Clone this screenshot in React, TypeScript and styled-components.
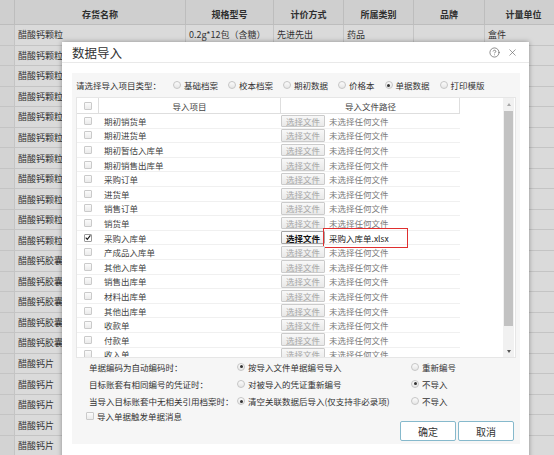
import { CircleHelp, X } from "lucide-react";
import styled, { createGlobalStyle } from "styled-components";

const GlobalStyle = createGlobalStyle`
  html, body {
    margin: 0;
    padding: 0;
  }
  body {
    width: 554px;
    height: 455px;
    overflow: hidden;
    font-family: "Noto Sans CJK SC", "Liberation Sans", sans-serif;
  }
  * {
    box-sizing: border-box;
  }
`;

const Page = styled.div`
  position: relative;
  width: 554px;
  height: 455px;
  overflow: hidden;
  background: #d8d8d8;
`;

/* ---------- sheet behind the modal ---------- */

const Sheet = styled.div`
  display: grid;
  grid-template-columns: 15px 171px 88px 70px 70px 71px 78px;
  grid-template-rows: 25px;
  grid-auto-rows: 20.55px;
`;

const HeadCell = styled.div`
  display: flex;
  align-items: flex-end;
  justify-content: center;
  padding-bottom: 4px;
  background: #cfcfcf;
  border-right: 1px solid #bdbdbd;
  border-bottom: 1px solid #bdbdbd;
  font-size: 9px;
  line-height: 10px;
  font-weight: bold;
  color: #2e2e2e;
  white-space: nowrap;
`;

const Cell = styled.div<{ $first?: boolean }>`
  display: flex;
  align-items: center;
  padding: 0 3px;
  background: ${(p) => (p.$first ? "#d3d3d3" : "#dadada")};
  border-right: 1px solid #c4c4c4;
  border-bottom: 1px solid #c4c4c4;
  font-size: 9px;
  color: #333;
  white-space: nowrap;
  overflow: hidden;
`;

/* ---------- modal ---------- */

const Dialog = styled.div`
  position: absolute;
  left: 62px;
  top: 42px;
  width: 467px;
  height: 425px;
  background: #fff;
  box-shadow: 0 0 5px rgba(0, 0, 0, 0.35);
  display: flex;
  flex-direction: column;
`;

const DialogHeader = styled.div`
  height: 21px;
  display: flex;
  align-items: center;
  padding: 0 11px 0 10px;
  border-bottom: 1px solid #e9e9e9;
`;

const Title = styled.div`
  font-size: 12.5px;
  color: #333;
`;

const HeaderTools = styled.div`
  margin-left: auto;
  display: flex;
  align-items: center;
  gap: 7px;
  color: #666;
`;

const Body = styled.div`
  padding: 10px 9px 0 10px;
`;

const Panel = styled.div`
  background: #f6f6f6;
  padding: 0 4px 3px 2px;
`;

const TypeRow = styled.div`
  height: 24px;
  display: flex;
  align-items: center;
  padding-left: 2px;
  font-size: 8.5px;
  color: #333;
  white-space: nowrap;
`;

const TypeLabel = styled.span`
  margin-right: 12px;
`;

const RadioItem = styled.label`
  display: flex;
  align-items: center;
  gap: 3px;
  margin-right: 10px;
`;

const RadioDot = styled.span<{ $on?: boolean }>`
  width: 8px;
  height: 8px;
  border-radius: 50%;
  border: 1px solid #c6c6c6;
  background: linear-gradient(#fbfbfb, #e6e6e6);
  display: inline-flex;
  align-items: center;
  justify-content: center;
  flex: none;
  &::after {
    content: "";
    width: 3px;
    height: 3px;
    border-radius: 50%;
    background: ${(p) => (p.$on ? "#333" : "transparent")};
  }
`;

const Box = styled.span<{ $on?: boolean }>`
  width: 8px;
  height: 8px;
  border: 1px solid ${(p) => (p.$on ? "#9a9a9a" : "#cacaca")};
  border-radius: 1px;
  background: ${(p) => (p.$on ? "#fff" : "linear-gradient(#fbfbfb, #ebebeb)")};
  display: inline-flex;
  align-items: center;
  justify-content: center;
  flex: none;
`;

const List = styled.div`
  margin-left: 2px;
  height: 261px;
  background: #fff;
  border: 1px solid #e6e6e6;
  display: flex;
  overflow: hidden;
`;

const Table = styled.div`
  width: 383px;
  flex: none;
`;

const Cols = "22px 182px 179px";

const TableHead = styled.div`
  display: grid;
  grid-template-columns: ${Cols};
  height: 16px;
  border-bottom: 1px solid #dedede;
  border-right: 1px solid #dedede;
  font-size: 8.5px;
  color: #444;
`;

const HeadItem = styled.div<{ $divider?: boolean }>`
  display: flex;
  align-items: center;
  justify-content: center;
  border-right: ${(p) => (p.$divider ? "1px solid #dedede" : "none")};
`;

const Row = styled.div`
  display: grid;
  grid-template-columns: ${Cols};
  height: 14.6px;
  border-bottom: 1px solid #f0f0f0;
  font-size: 8.5px;
  color: #444;
  white-space: nowrap;
`;

const CheckCell = styled.div`
  display: flex;
  align-items: center;
  justify-content: center;
`;

const NameCell = styled.div`
  display: flex;
  align-items: center;
  padding-left: 5px;
`;

const FileCell = styled.div`
  position: relative;
  display: flex;
  align-items: center;
  gap: 4px;
`;

const FileButton = styled.span<{ $on?: boolean }>`
  height: 12.5px;
  padding: 0 4px;
  display: inline-flex;
  align-items: center;
  border: 1px solid ${(p) => (p.$on ? "#a4a4a4" : "#cbcbcb")};
  border-radius: 1px;
  background: ${(p) => (p.$on ? "linear-gradient(#fdfdfd, #ededed)" : "linear-gradient(#f8f8f8, #e9e9e9)")};
  color: ${(p) => (p.$on ? "#111" : "#a5a5a5")};
  font-weight: ${(p) => (p.$on ? "bold" : "normal")};
  font-size: 8.5px;
  line-height: 10px;
`;

const FileName = styled.span<{ $on?: boolean }>`
  color: ${(p) => (p.$on ? "#222" : "#7a7a7a")};
`;

const Mark = styled.span`
  position: absolute;
  left: 42px;
  top: -3px;
  width: 85px;
  height: 20.6px;
  border: 1.5px solid #df2f2f;
`;

const Gap = styled.div`
  flex: 1;
`;

const ScrollBar = styled.div`
  width: 11px;
  margin-right: 1px;
  background: #f1f1f1;
  display: flex;
  flex-direction: column;
  align-items: center;
`;

const ScrollArrow = styled.div<{ $down?: boolean }>`
  height: 12px;
  display: flex;
  align-items: center;
  justify-content: center;
  &::after {
    content: "";
    border-left: 2.5px solid transparent;
    border-right: 2.5px solid transparent;
    ${(p) => (p.$down ? "border-top: 3px solid #555;" : "border-bottom: 3px solid #a8a8a8;")}
  }
`;

const Thumb = styled.div`
  width: 9px;
  height: 215px;
  margin-top: 1px;
  background: #c2c2c2;
`;

const Options = styled.div`
  padding-left: 15px;
  font-size: 8.5px;
  color: #333;
  white-space: nowrap;
`;

const OptionRow = styled.div<{ $h: number }>`
  display: grid;
  grid-template-columns: 148px 174px auto;
  align-items: center;
  height: ${(p) => p.$h}px;
`;

const Choice = styled.label`
  display: flex;
  align-items: center;
  gap: 3px;
`;

const CheckRow = styled.label`
  display: flex;
  align-items: center;
  gap: 3px;
  height: 11px;
  margin-left: -3px;
`;

const Footer = styled.div`
  display: flex;
  justify-content: flex-end;
  gap: 2px;
  padding-right: 2px;
`;

const ActionButton = styled.button`
  width: 56px;
  height: 20px;
  padding: 0;
  border: 1px solid #86b9cc;
  border-radius: 2px;
  background: #fff;
  color: #333;
  font-family: inherit;
  font-size: 10px;
`;

const items = [
  "期初销货单",
  "期初进货单",
  "期初暂估入库单",
  "期初销售出库单",
  "采购订单",
  "进货单",
  "销售订单",
  "销货单",
  "采购入库单",
  "产成品入库单",
  "其他入库单",
  "销售出库单",
  "材料出库单",
  "其他出库单",
  "收款单",
  "付款单",
  "收入单",
];

const types = [
  { label: "基础档案", on: false },
  { label: "校本档案", on: false },
  { label: "期初数据", on: false },
  { label: "价格本", on: false },
  { label: "单据数据", on: true },
  { label: "打印模版", on: false },
];

const sheetHead = ["", "存货名称", "规格型号", "计价方式", "所属类别", "品牌", "计量单位"];

const sheetNames = Array.from({ length: 22 }, (_, i) =>
  i < 11 ? "醋酸钙颗粒" : i < 16 ? "醋酸钙胶囊" : "醋酸钙片"
);

const Tick = () => (
  <svg width="7" height="7" viewBox="0 0 7 7">
    <path d="M0.8 3.6 L2.7 5.6 L6.3 1" fill="none" stroke="#1a1a1a" strokeWidth="1.3" />
  </svg>
);

const App = () => {
  return (
    <Page>
      <GlobalStyle />
      <Sheet>
        {sheetHead.map((h, i) => (
          <HeadCell key={i}>{h}</HeadCell>
        ))}
        {sheetNames.map((name, r) => {
          const rest = r === 0 ? ["0.2g*12包（含糖）", "先进先出", "药品", "", "盒件"] : ["", "", "", "", ""];
          return [
            <Cell key={`${r}-0`} $first />,
            <Cell key={`${r}-1`}>{name}</Cell>,
            ...rest.map((v, c) => <Cell key={`${r}-${c + 2}`}>{v}</Cell>),
          ];
        })}
      </Sheet>

      <Dialog>
        <DialogHeader>
          <Title>数据导入</Title>
          <HeaderTools>
            <CircleHelp size={11} strokeWidth={1.6} />
            <X size={11} strokeWidth={1.4} />
          </HeaderTools>
        </DialogHeader>
        <Body>
          <Panel>
            <TypeRow>
              <TypeLabel>请选择导入项目类型：</TypeLabel>
              {types.map((t) => (
                <RadioItem key={t.label}>
                  <RadioDot $on={t.on} />
                  {t.label}
                </RadioItem>
              ))}
            </TypeRow>

            <List>
              <Table>
                <TableHead>
                  <HeadItem $divider>
                    <Box />
                  </HeadItem>
                  <HeadItem $divider>导入项目</HeadItem>
                  <HeadItem>导入文件路径</HeadItem>
                </TableHead>
                {items.map((name, i) => {
                  const on = i === 8;
                  return (
                    <Row key={name}>
                      <CheckCell>
                        <Box $on={on}>{on && <Tick />}</Box>
                      </CheckCell>
                      <NameCell>{name}</NameCell>
                      <FileCell>
                        <FileButton $on={on}>选择文件</FileButton>
                        <FileName $on={on}>{on ? "采购入库单.xlsx" : "未选择任何文件"}</FileName>
                        {on && <Mark />}
                      </FileCell>
                    </Row>
                  );
                })}
              </Table>
              <Gap />
              <ScrollBar>
                <ScrollArrow />
                <Thumb />
                <Gap />
                <ScrollArrow $down />
              </ScrollBar>
            </List>

            <Options>
              <OptionRow $h={17}>
                <span>单据编码为自动编码时：</span>
                <Choice>
                  <RadioDot $on />
                  按导入文件单据编号导入
                </Choice>
                <Choice>
                  <RadioDot />
                  重新编号
                </Choice>
              </OptionRow>
              <OptionRow $h={17}>
                <span>目标账套有相同编号的凭证时：</span>
                <Choice>
                  <RadioDot />
                  对被导入的凭证重新编号
                </Choice>
                <Choice>
                  <RadioDot $on />
                  不导入
                </Choice>
              </OptionRow>
              <OptionRow $h={18}>
                <span>当导入目标账套中无相关引用档案时：</span>
                <Choice>
                  <RadioDot $on />
                  清空关联数据后导入(仅支持非必录项)
                </Choice>
                <Choice>
                  <RadioDot />
                  不导入
                </Choice>
              </OptionRow>
              <CheckRow>
                <Box />
                导入单据触发单据消息
              </CheckRow>
            </Options>

            <Footer>
              <ActionButton>确定</ActionButton>
              <ActionButton>取消</ActionButton>
            </Footer>
          </Panel>
        </Body>
      </Dialog>
    </Page>
  );
};

export default App;
